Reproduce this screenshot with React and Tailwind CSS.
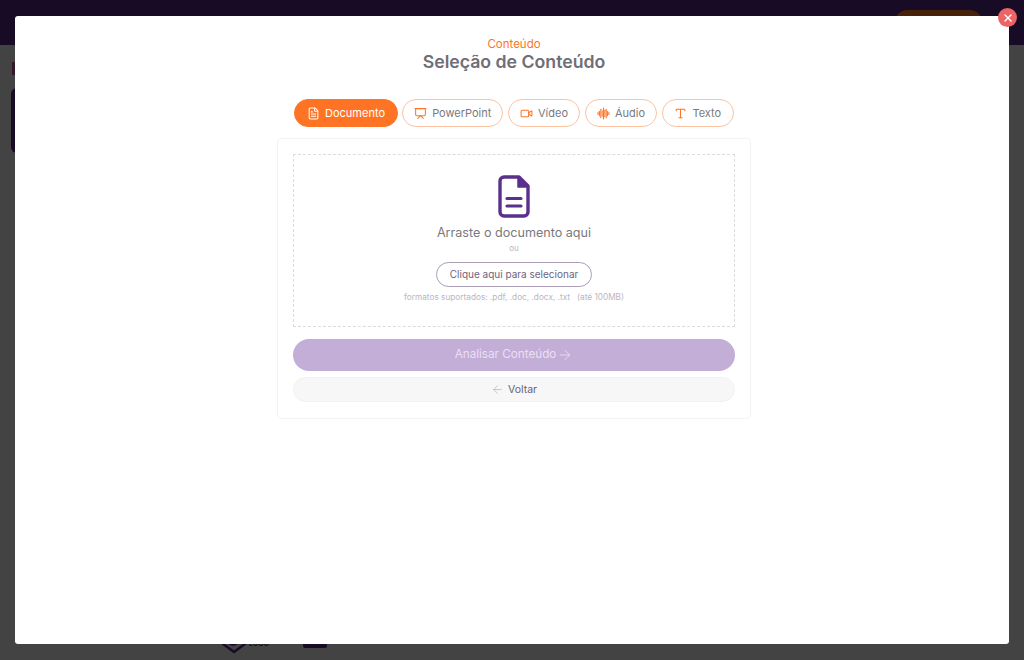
import React from "react";
import { FileText, Presentation, Video, Type, ArrowRight, ArrowLeft, X } from "lucide-react";

function Wave({ size, className }) {
  const bars = [[2, 10, 14], [4.5, 8, 16], [7, 4, 20], [9.5, 7, 17], [12, 2, 22], [14.5, 6, 18], [17, 4, 20], [19.5, 8, 16], [22, 10, 14]];
  return (
    <svg width={size} height={size} viewBox="0 0 24 24" fill="none" stroke="currentColor" strokeWidth="1.9" strokeLinecap="round" className={className}>
      {bars.map(([x, a, b]) => (
        <path key={x} d={`M${x} ${a}V${b}`} />
      ))}
    </svg>
  );
}

const tabs = [
  { label: "Documento", Icon: FileText, w: "w-[103.5px]", active: true },
  { label: "PowerPoint", Icon: Presentation, w: "w-[101px]" },
  { label: "Vídeo", Icon: Video, w: "w-[72.5px]" },
  { label: "Áudio", Icon: Wave, w: "w-[72.5px]" },
  { label: "Texto", Icon: Type, w: "w-[72px]" },
];

export default function App() {
  return (
    <div className="relative h-[660px] w-[1024px] overflow-hidden bg-[#434343] font-['Inter',sans-serif]">
      <header className="flex h-[45px] justify-end bg-[#170b26] pr-[42px] pt-[10px]">
        <div className="h-[35px] w-[87px] rounded-xl bg-[#47210a]" />
      </header>
      <div className="pl-[11px] pt-[17px]">
        <div className="ml-[1px] h-[13px] w-[4px] bg-[#33182a]" />
        <div className="mt-[13px] h-[65px] w-[10px] rounded-l-md bg-[#170b26]" />
      </div>

      <svg className="absolute left-[221px] top-[634px]" width="26" height="20" viewBox="0 0 26 20" fill="none">
        <path d="M2 0v10l11 8 11-8V0" stroke="#170b26" strokeWidth="2.4" />
        <path d="M8 9c3 3 8 2 9-2" stroke="#170b26" strokeWidth="2" />
      </svg>
      <span className="absolute left-[249px] top-[640px] text-[7px] font-bold leading-[8px] text-[#170b26]">LOGO</span>
      <div className="absolute left-[303px] top-[630px] h-[18px] w-[24px] rounded-[2px] bg-[#170b26]" />

      <div className="absolute left-[15px] top-[16px] flex h-[628px] w-[994px] flex-col items-center rounded-[3px] bg-white pl-[4px]">
        <p className="mt-[22px] text-[11.5px] leading-[13px] text-[#ff7424]">Conteúdo</p>
        <h1 className="text-[17.7px] font-semibold leading-[22px] text-[#6f6e76]">Seleção de Conteúdo</h1>

        <div className="mt-[26px] flex gap-[4.5px]">
          {tabs.map(({ label, Icon, w, active }) => (
            <div
              key={label}
              className={`flex h-[28px] items-center justify-center gap-[5px] rounded-full border text-[11px] ${w} ${
                active ? "border-[#ff7424] bg-[#ff7424] text-white" : "border-[#fcc2a2] bg-white text-[#7a7980]"
              }`}
            >
              <Icon size={13} strokeWidth={1.9} className={active ? "text-white" : "text-[#ff7424]"} />
              <span>{label}</span>
            </div>
          ))}
        </div>

        <section className="mt-[11px] flex h-[281px] w-[474px] flex-col rounded-[4px] border border-[#f3f3f3] p-[15px]">
          <div className="flex h-[173px] flex-col items-center border border-dashed border-[#dcdce0] pt-[19px]">
            <svg width="34" height="44" viewBox="0 0 34 44" fill="none" className="text-[#5b2f8c]">
              <path
                d="M7 3h15l9 9v26a4 4 0 0 1-4 4H7a4 4 0 0 1-4-4V7a4 4 0 0 1 4-4z"
                stroke="currentColor"
                strokeWidth="3.4"
                strokeLinejoin="round"
              />
              <path d="M21 3v10h10z" fill="currentColor" stroke="currentColor" strokeWidth="1.5" strokeLinejoin="round" />
              <path d="M10 24.5h14M10 32h14" stroke="currentColor" strokeWidth="3.2" strokeLinecap="round" />
            </svg>
            <p className="mt-[7px] text-[12.6px] leading-[16px] text-[#7a7980]">Arraste o documento aqui</p>
            <p className="mt-[2px] text-[8px] leading-[10px] text-[#b4b3ba]">ou</p>
            <div className="mt-[9px] flex h-[25px] w-[156px] items-center justify-center rounded-full border border-[#a99eb6] text-[10px] text-[#6d6480]">
              Clique aqui para selecionar
            </div>
            <p className="mt-[5px] whitespace-pre text-[8.25px] leading-[11px] text-[#b9b6c6]">
              formatos suportados: .pdf, .doc, .docx, .txt   (até 100MB)
            </p>
          </div>

          <div className="mt-[12px] flex h-[32px] items-center justify-center gap-[1px] rounded-full bg-[#c3aed8] text-[11.7px] text-[#ecdff3]">
            Analisar Conteúdo
            <ArrowRight size={16} strokeWidth={1.3} />
          </div>
          <div className="mt-[6px] flex h-[25px] items-center justify-center gap-[4px] rounded-full border border-[#f2f2f2] bg-[#f7f7f7] text-[10.5px] text-[#6a6472]">
            <ArrowLeft size={13} strokeWidth={1.1} className="text-[#a9a7ae]" />
            Voltar
          </div>
        </section>
      </div>

      <div className="absolute left-[998px] top-[8px] flex h-[19px] w-[19px] items-center justify-center rounded-full bg-[#ee6366]">
        <X size={12} strokeWidth={2.8} className="text-white" />
      </div>
    </div>
  );
}
